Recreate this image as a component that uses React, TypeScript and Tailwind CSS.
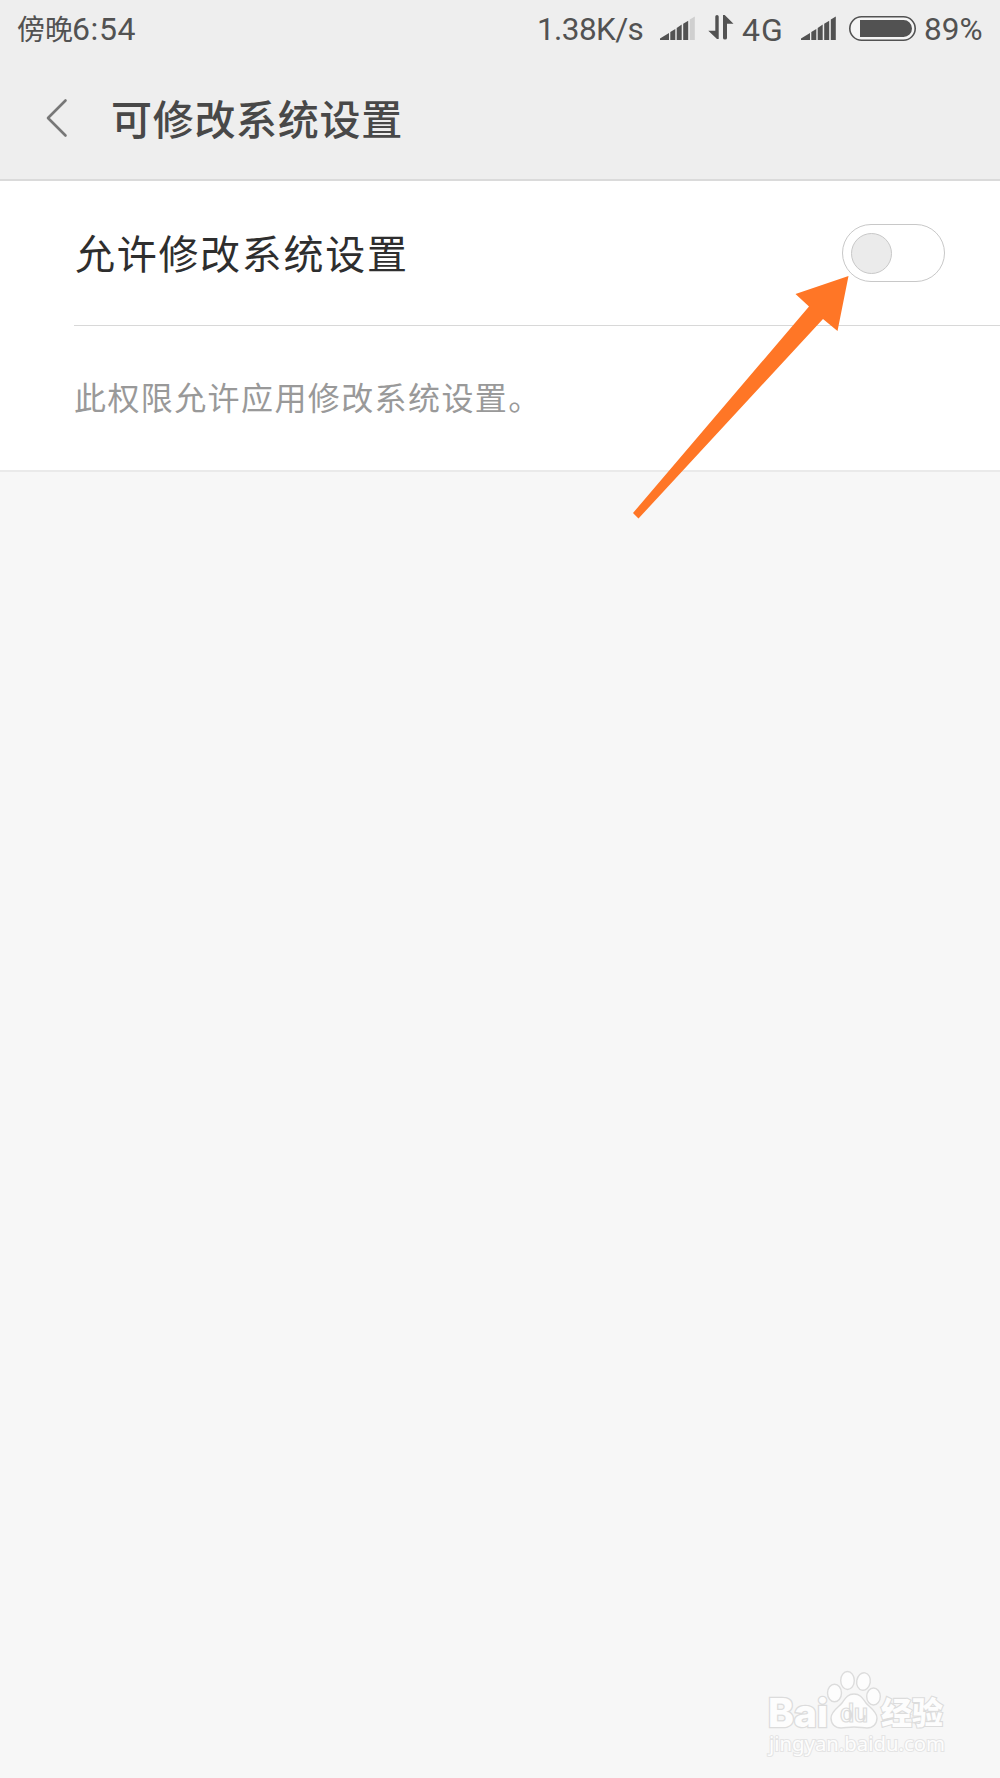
import React from "react";

const SignalIcon: React.FC<{ weak?: boolean }> = ({ weak = false }) => (
  <svg width="36" height="24" viewBox="0 0 36 24" className="mb-[2px] shrink-0" fill="#525252">
    <path d="M0 24v-1.500l9-5.500v7z" />
    <path d="M10.300 24v-8l5-3v11z" />
    <path d="M16.700 24V12l5-3.500V24z" />
    <path d="M23.200 24V7.800l5-3V24z" />
    <path d="M29.800 24V3.500l5-3V24z" fill={weak ? "#cfcfcf" : "#525252"} />
  </svg>
);

const DataArrows: React.FC = () => (
  <svg width="26" height="26" viewBox="0 0 26 26" className="mb-[2px] shrink-0" fill="#525252">
    <path d="M7.300 1.500Q7.300 0 9 0t1.700 1.500V24H9L.300 15.700h7z" />
    <path d="M15 0h1.700L25.500 8.700h-6.500V23q0 1.500-2 1.500T15 23z" />
  </svg>
);

const BatteryIcon: React.FC = () => (
  <svg width="67" height="25" viewBox="0 0 67 25" className="mb-[2px] shrink-0">
    <rect x="0.800" y="0.800" width="65.400" height="23.400" rx="11.700" fill="#f5f5f5" stroke="#525252" strokeWidth="1.600" />
    <path d="M11 4h43.500a8.500 8.500 0 0 1 0 17H11z" fill="#525252" />
  </svg>
);

const StatusBar: React.FC = () => (
  <div className="flex h-[58px] items-center pl-[17px] text-[32px] leading-none whitespace-nowrap text-[#525252]">
    <div className="flex w-[520px] items-center">
      <span className="w-[55px] pt-[3px] text-[28px]">傍晚</span>
      <span className="text-[32px] tracking-[0.600px]">6:54</span>
    </div>
    <span className="w-[123px] pt-px text-[31.500px] tracking-[-0.600px]">1.38K/s</span>
    <SignalIcon weak />
    <div className="ml-[12px] flex w-[34px]">
      <DataArrows />
    </div>
    <span className="w-[59px] pt-px text-[32px] tracking-[1px]">4G</span>
    <SignalIcon />
    <div className="ml-[12px] flex w-[75px]">
      <BatteryIcon />
    </div>
    <span className="pt-px text-[31.500px]">89%</span>
  </div>
);

const Watermark: React.FC = () => (
  <svg
    width="200"
    height="96"
    viewBox="0 0 200 96"
    className="absolute right-[40px] bottom-[18px]"
    fill="#fdfdfd"
    stroke="#dcdcdc"
    strokeWidth="1.400"
  >
    <g transform="translate(-20 -14)">
      <text x="28" y="76.500" fontSize="39" fontWeight="800" className="font-[Inter]" textLength="60" lengthAdjust="spacingAndGlyphs" strokeWidth="2.600" paintOrder="stroke">
        Bai
      </text>
      <ellipse cx="94.500" cy="43" rx="7" ry="8.800" />
      <ellipse cx="107.500" cy="30.500" rx="6.800" ry="9" />
      <ellipse cx="123.500" cy="31.500" rx="6.800" ry="8.800" transform="rotate(10 123.500 31.500)" />
      <ellipse cx="133.500" cy="46.500" rx="6.800" ry="8.500" />
      <path d="M114 44c-7 0-9 5-12 9s-11 8-11 15c0 6 4 10 10 10 4 0 8-1 13-1s9 1 13 1c6 0 10-4 10-10 0-7-8-11-11-15s-5-9-12-9z" />
      <text x="100" y="72" fontSize="25" fontWeight="500" textLength="28" lengthAdjust="spacingAndGlyphs" strokeWidth="1.200">
        du
      </text>
      <text x="141" y="73.500" fontSize="31" fontWeight="900" textLength="62" strokeWidth="2.200" paintOrder="stroke">
        经验
      </text>
      <text x="29" y="100.500" fontSize="20" className="font-['Noto_Sans']" textLength="176" lengthAdjust="spacingAndGlyphs" stroke="#e4e4e4" strokeWidth="2" paintOrder="stroke">
        jingyan.baidu.com
      </text>
    </g>
  </svg>
);

const App: React.FC = () => {
  return (
    <div className="relative h-[1778px] w-[1000px] overflow-hidden bg-[#f7f7f7] font-[Roboto,'Noto_Sans_CJK_SC',sans-serif]">
      {/* Header */}
      <header className="h-[181px] border-b-2 border-[#dadada] bg-[#eeeeee]">
        <StatusBar />
        <div className="flex h-[119px] items-center pl-[45px]">
          <svg width="24" height="40" viewBox="0 0 24 40" fill="none" stroke="#777777" strokeWidth="2.600" strokeLinecap="round" strokeLinejoin="round">
            <path d="M20.500 2.500L3 20l17.500 17.500" />
          </svg>
          <h1 className="ml-[42px] pt-[8px] text-[41px] leading-none font-medium tracking-[0.700px] text-[#484848]">
            可修改系统设置
          </h1>
        </div>
      </header>

      {/* Permission setting */}
      <main className="border-b-2 border-[#eaeaea] bg-white pl-[74px]">
        <div className="flex h-[145px] items-center justify-between border-b border-[#d8d8d8] pr-[55px]">
          <span className="pt-[5px] pl-px text-[40px] leading-none tracking-[1.700px] text-[#2e2e2e]">
            允许修改系统设置
          </span>
          <button
            role="switch"
            aria-checked="false"
            aria-label="允许修改系统设置"
            className="flex h-[58px] w-[103px] items-center rounded-full border border-[#c8c8c8] pl-[8px]"
          >
            <span className="h-[41px] w-[41px] rounded-full border border-[#c8c8c8] bg-[#ebebeb]" />
          </button>
        </div>
        <p className="flex h-[144px] items-center pt-[2px] text-[32px] leading-none tracking-[1.400px] text-[#999999]">
          此权限允许应用修改系统设置。
        </p>
      </main>

      {/* Pointer to the switch */}
      <svg width="220" height="246" viewBox="0 0 220 246" className="absolute top-[274px] left-[632px]" fill="#ff7626">
        <path d="M216.500 2L205.500 57l-14.500-12L6.500 244.500l-5.500-5.500L177 32.500 163.500 20z" />
      </svg>

      <Watermark />
    </div>
  );
};

export default App;
